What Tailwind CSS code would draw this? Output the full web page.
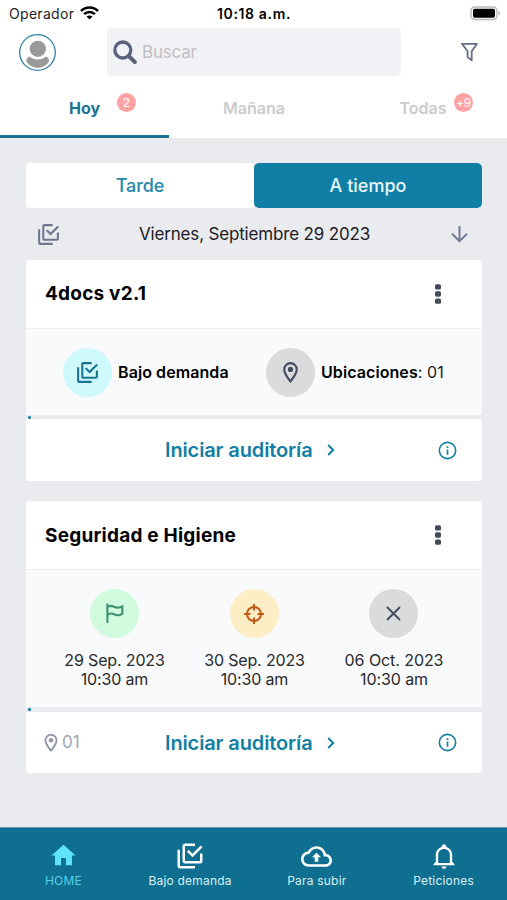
<!DOCTYPE html>
<html lang="es">
<head>
<meta charset="utf-8">
<title>Auditorías</title>
<script src="https://cdn.jsdelivr.net/npm/@tailwindcss/browser@4"></script>
</head>
<body class="bg-[#e9ebef] font-['Inter',sans-serif] text-black">
<svg class="hidden">
  <symbol id="checks" viewBox="0 0 24 24"><path d="M20 16V10H22V16A2 2 0 0 1 20 18H8C6.89 18 6 17.1 6 16V4C6 2.89 6.89 2 8 2H16V4H8V16H20M10.91 7.08L14 10.17L20.59 3.58L22 5L14 13L9.5 8.5L10.91 7.08M16 20V22H4C2.9 22 2 21.1 2 20V7H4V20H16Z"/></symbol>
  <symbol id="pin" viewBox="0 0 24 24"><path d="M12 6.5A2.5 2.5 0 0 1 14.5 9A2.5 2.5 0 0 1 12 11.5A2.5 2.5 0 0 1 9.5 9A2.5 2.5 0 0 1 12 6.5M12 2A7 7 0 0 1 19 9C19 14.25 12 22 12 22C12 22 5 14.25 5 9A7 7 0 0 1 12 2M12 4A5 5 0 0 0 7 9C7 10 7 12 12 18.71C17 12 17 10 17 9A5 5 0 0 0 12 4Z"/></symbol>
  <symbol id="info" viewBox="0 0 20 20"><circle cx="10" cy="10" r="8.6" fill="none" stroke="currentColor" stroke-width="1.7"/><path d="M9.1 9h1.8v5.5H9.1zM9.1 5.4h1.8v1.9H9.1z"/></symbol>
  <symbol id="dots" viewBox="0 0 6 20"><rect x="0" y="0.2" width="6" height="5.4" rx="1.6"/><rect x="0" y="7.3" width="6" height="5.4" rx="1.6"/><rect x="0" y="14.4" width="6" height="5.4" rx="1.6"/></symbol>
  <symbol id="chev" viewBox="0 0 8 12"><path d="M1.2 1l5 5-5 5" fill="none" stroke="currentColor" stroke-width="2"/></symbol>
</svg>
<div class="flex h-[900px] w-[507px] flex-col overflow-hidden">
  <header class="h-[138px] shrink-0 bg-white">
    <div class="flex h-7 items-center pl-[9px] pr-[6px]">
      <div class="flex w-[200px] items-center gap-[6px]">
        <span class="text-[14px] leading-7 tracking-[0.3px] text-[#222]">Operador</span>
        <svg class="mb-[2px] h-[14px] w-[19px]" viewBox="0 0 19 14" fill="none" stroke="#000" stroke-width="2.5"><path d="M1 5C5.6.4 13.400.4 18 5M4.100 8.200c3-3 7.800-3 10.800 0"/><path d="M9.500 13.500L6.500 10.600c1.700-1.600 4.300-1.600 6 0z" fill="#000" stroke="none"/></svg>
      </div>
      <span class="w-[90px] text-center text-[14px] font-semibold leading-7 tracking-[0.65px]">10:18 a.m.</span>
      <svg class="mb-[2px] ml-auto h-[15px] w-[31px]" viewBox="0 0 31 15"><rect x="1" y="1" width="26" height="12.500" rx="3.800" fill="#fff" stroke="#b9b9b9" stroke-width="1.500"/><rect x="3" y="2.800" width="22" height="9" rx="1.800"/><path d="M28.600 5v4.600c1.800-.6 1.800-4 0-4.600z" fill="#aaa"/></svg>
    </div>
    <div class="flex h-12 items-center pl-[19px] pr-[29px]">
      <svg class="h-[37px] w-[37px]" viewBox="0 0 37 37"><circle cx="18.500" cy="18.500" r="17.800" fill="#fff" stroke="#2f83a5" stroke-width="1.300"/><circle cx="18.800" cy="14.800" r="8.100" fill="#999"/><path d="M10.500 22.600c4.500 4 12 4 16.500 0 2 .8 3 2.400 3.200 4.400-4.500 9-18.500 9-23 0 .2-2 1.300-3.600 3.300-4.400z" fill="#999"/></svg>
      <div class="ml-[51px] flex h-12 w-[294px] items-center rounded-[5px] bg-[#f0f2f6] pl-[6px]">
        <svg class="h-6 w-6" viewBox="0 0 24 24" fill="none" stroke="#59617d"><circle cx="9.800" cy="10" r="8" stroke-width="3.300"/><path d="M15.800 16l6 6" stroke-width="4" stroke-linecap="round"/></svg>
        <span class="ml-[5px] pt-[2px] text-[17px] tracking-[-0.2px] text-[#bfc0c2]">Buscar</span>
      </div>
      <svg class="ml-auto h-[20px] w-[17px]" viewBox="0 0 17 20" fill="none" stroke="#656c87" stroke-width="1.800" stroke-linejoin="round"><path d="M1 1.800h15L10.700 9.200v9.200L6.600 15V9.200z"/></svg>
    </div>
    <nav class="grid h-[62px] grid-cols-3 text-[16px] font-semibold leading-[20px]">
      <div class="relative border-b-[3px] border-[#1b7394] pt-[22px] text-center font-bold text-[#1b7394]">Hoy<span class="absolute left-[117px] top-[17px] h-[19px] w-[19px] rounded-full bg-[#ffa2a4] text-center text-[12px] font-normal leading-[19px] text-white">2</span></div>
      <div class="pl-px pt-[22px] text-center text-[#cbcbcb]">Mañana</div>
      <div class="relative pl-px pt-[22px] text-center text-[#cbcbcb]">Todas<span class="absolute left-[116px] top-[17px] h-[19px] w-[19px] rounded-full bg-[#ffa2a4] text-center text-[12px] font-normal leading-[19px] tracking-[-0.3px] text-white">+9</span></div>
    </nav>
  </header>

  <main class="flex-1 pl-[26px] pr-[25px] pt-[25px]">
    <div class="flex h-[45px] text-[18px] font-medium leading-[46px]">
      <div class="w-[228px] rounded-[4px] bg-white text-center tracking-[-0.1px] text-[#2589ad]">Tarde</div>
      <div class="w-[228px] rounded-[5px] bg-[#117fa5] text-center text-[#e6f8fd]">A tiempo</div>
    </div>
    <div class="flex h-[52px] items-center justify-between pl-[10px] pr-[14px]">
      <svg class="h-[25px] w-[25px] fill-[#6e7690]"><use href="#checks"/></svg>
      <span class="mr-[3px] pt-px text-[17px] tracking-[-0.17px] text-[#1c1c1e]">Viernes, Septiembre 29 2023</span>
      <svg class="h-[18px] w-[17px]" viewBox="0 0 17 18" fill="none" stroke="#6e7690" stroke-width="1.900"><path d="M8.500 1v15M1 8.800l7.500 7.400L16 8.800"/></svg>
    </div>

    <section class="h-[221px] overflow-hidden rounded-[4px] bg-white">
      <div class="flex h-[69px] items-center justify-between border-b border-[#eeeff1] pl-[19px] pr-[41px]">
        <h2 class="pt-px text-[19px] font-bold tracking-[0.22px]">4docs v2.1</h2>
        <svg class="mb-px h-5 w-[6px] fill-[#414b5e]"><use href="#dots"/></svg>
      </div>
      <div class="flex h-[86px] items-center bg-[#f9fafc] pl-[37px] text-[16px]">
        <div class="flex w-[203px] items-center gap-[6px]">
          <div class="flex h-[49px] w-[49px] items-center justify-center rounded-full bg-[#cefafe]"><svg class="h-[25px] w-[25px] fill-[#1b7394]"><use href="#checks"/></svg></div>
          <span class="whitespace-nowrap font-semibold tracking-[0.08px]">Bajo demanda</span>
        </div>
        <div class="flex items-center gap-[6px]">
          <div class="flex h-[49px] w-[49px] items-center justify-center rounded-full bg-[#dadbdc]"><svg class="h-[25px] w-[25px] fill-[#454b60]"><use href="#pin"/></svg></div>
          <span class="whitespace-nowrap tracking-[0.08px] text-[#1c1c1e]"><b class="font-semibold text-black">Ubicaciones</b>: 01</span>
        </div>
      </div>
      <div class="flex h-1 items-center bg-[#e9ebee] pl-[2px]"><i class="h-[3px] w-[3px] rounded-[1px] bg-[#2589ad]"></i></div>
      <div class="flex h-[62px] items-center pl-[19px] pr-[25px] text-[#117fa5]">
        <div class="w-[120px]"></div>
        <span class="text-[20px] font-semibold tracking-[-0.13px]">Iniciar auditoría</span>
        <svg class="ml-[14px] h-3 w-2"><use href="#chev"/></svg>
        <svg class="ml-auto h-[19px] w-[19px] fill-current"><use href="#info"/></svg>
      </div>
    </section>

    <section class="mt-5 h-[272px] overflow-hidden rounded-[4px] bg-white">
      <div class="flex h-[69px] items-center justify-between border-b border-[#eeeff1] pl-[19px] pr-[41px]">
        <h2 class="pt-[2px] text-[19px] font-bold tracking-[0.22px]">Seguridad e Higiene</h2>
        <svg class="h-5 w-[6px] fill-[#414b5e]"><use href="#dots"/></svg>
      </div>
      <div class="grid h-[137px] grid-cols-[140px_140px_139px] bg-[#f9fafc] pl-[18px] pt-[19px] text-center text-[16px] leading-[19px] text-[#29292b]">
        <div class="flex flex-col items-center">
          <div class="mb-[13px] flex h-[49px] w-[49px] items-center justify-center rounded-full bg-[#d0fbdf]"><svg class="h-[25px] w-[25px] fill-[#3f9270]" viewBox="0 0 24 24"><path d="M4.200 2.500H6.200V4.200C7.500 3.600 9.500 3.200 11.300 4.300C13.500 5.700 16.500 5.900 20.500 3.500V12.600C17.500 15 14 15.200 11.200 13.600C9.300 12.500 7.600 12.900 6.200 13.900V21H4.200zM6.200 6.200V11.700C8.500 10.500 10.500 10.800 12.300 11.900C14.500 13.100 16.700 12.800 18.500 11.500V6.800C15.800 7.900 13 7.600 10.500 6.200C9 5.400 7.600 5.600 6.200 6.200z"/></svg></div>
          <div class="pl-px tracking-[-0.15px]">29 Sep. 2023<br>10:30 am</div>
        </div>
        <div class="flex flex-col items-center">
          <div class="mb-[13px] flex h-[49px] w-[49px] items-center justify-center rounded-full bg-[#feeec5]"><svg class="h-[20px] w-[20px]" viewBox="0 0 20 20" fill="none" stroke="#c25a16" stroke-width="2"><circle cx="10" cy="10" r="7"/><path d="M10 0v6.500M10 13.500V20M0 10h6.500M13.500 10H20"/></svg></div>
          <div class="pl-px tracking-[-0.15px]">30 Sep. 2023<br>10:30 am</div>
        </div>
        <div class="flex flex-col items-center">
          <div class="mb-[13px] flex h-[49px] w-[49px] items-center justify-center rounded-full bg-[#dadbdc]"><svg class="h-[15px] w-[15px]" viewBox="0 0 15 15" fill="none" stroke="#454b60" stroke-width="1.900"><path d="M1 1l13 13M14 1L1 14"/></svg></div>
          <div class="pl-px tracking-[-0.08px]">06 Oct. 2023<br>10:30 am</div>
        </div>
      </div>
      <div class="flex h-[5px] items-center bg-[#e9ebee] pl-[2px]"><i class="h-[3px] w-[3px] rounded-[1px] bg-[#2589ad]"></i></div>
      <div class="flex h-[61px] items-center pl-[14px] pr-[25px] text-[#117fa5]">
        <div class="flex w-[125px] items-center text-[17px] text-[#a1a5b2]"><svg class="h-[22px] w-[22px] fill-[#9297a8]"><use href="#pin"/></svg>01</div>
        <span class="text-[20px] font-semibold tracking-[-0.13px]">Iniciar auditoría</span>
        <svg class="ml-[14px] h-3 w-2"><use href="#chev"/></svg>
        <svg class="ml-auto h-[19px] w-[19px] fill-current"><use href="#info"/></svg>
      </div>
    </section>
  </main>

  <footer class="grid h-[73px] shrink-0 grid-cols-4 border-t border-[#5b9bb2] bg-[#0e6f90] pt-[13px] text-center text-[12px] leading-4 tracking-[0.2px] text-[#d8eff6]">
    <div class="flex flex-col items-center text-[#58cfe9]"><svg class="mb-[3px] h-[29px] w-[29px] fill-[#5fe3f8]" viewBox="0 0 24 24"><path d="M10 20V14H14V20H19V12H22L12 3L2 12H5V20H10Z"/></svg>HOME</div>
    <div class="flex flex-col items-center"><svg class="mb-[2px] h-[30px] w-[30px] fill-white"><use href="#checks"/></svg>Bajo demanda</div>
    <div class="flex flex-col items-center"><svg class="mb-px h-[31px] w-[31px] fill-white" viewBox="0 0 24 24"><path d="M19.350 10.040C18.670 6.590 15.640 4 12 4 9.110 4 6.600 5.640 5.350 8.040 2.340 8.360 0 10.910 0 14c0 3.310 2.690 6 6 6h13c2.760 0 5-2.240 5-5 0-2.640-2.050-4.780-4.650-4.960zM19 18H6c-2.210 0-4-1.790-4-4 0-2.050 1.530-3.760 3.560-3.970l1.070-.11.5-.95C8.080 7.140 9.940 6 12 6c2.620 0 4.880 1.860 5.390 4.430l.3 1.500 1.530.11c1.560.1 2.780 1.410 2.780 2.960 0 1.650-1.350 3-3 3zM8.500 12.500h2.100v3.500h2.800v-3.500h2.100L12 9z"/></svg>Para subir</div>
    <div class="flex flex-col items-center"><svg class="mb-[2px] h-[30px] w-[28px] fill-white" viewBox="0 0 24 24"><path d="M10 21H14C14 22.100 13.100 23 12 23S10 22.100 10 21M21 19V20H3V19L5 17V11C5 7.900 7 5.200 10 4.300V4C10 2.900 10.900 2 12 2S14 2.900 14 4V4.300C17 5.200 19 7.900 19 11V17L21 19M17 11C17 8.200 14.800 6 12 6S7 8.200 7 11V18H17V11Z"/></svg>Peticiones</div>
  </footer>
</div>
</body>
</html>
